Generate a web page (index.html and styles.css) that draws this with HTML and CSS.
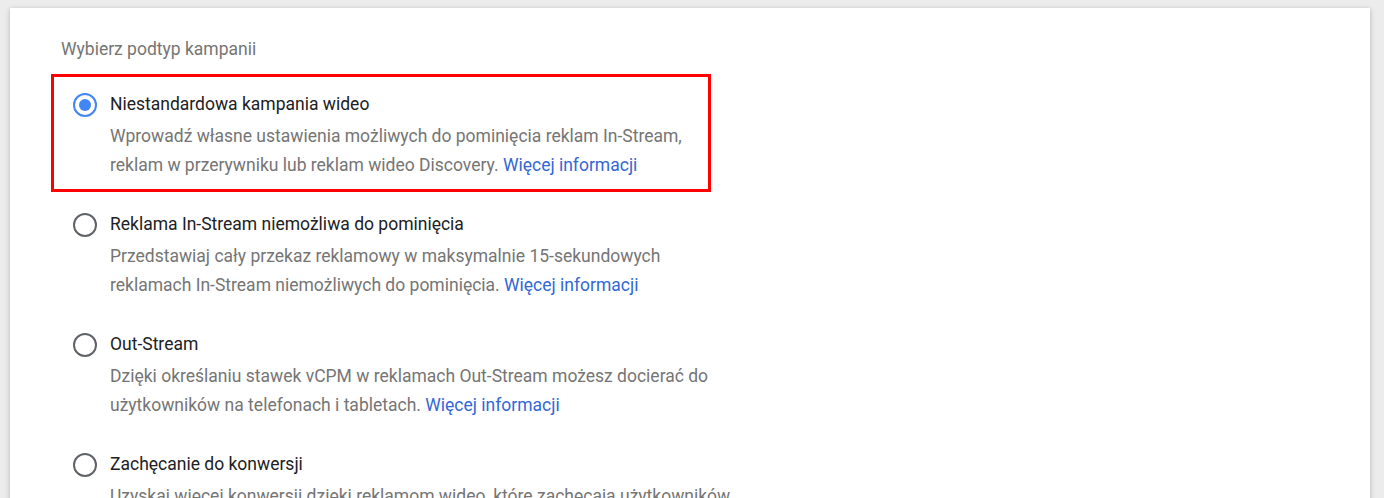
FILE: index.html
```html
<!DOCTYPE html>
<html lang="pl">
<head>
    <meta charset="UTF-8">
    <meta name="viewport" content="width=device-width, initial-scale=1.0">
    <title>Podtyp kampanii</title>
    <link rel="stylesheet" href="styles.css">
</head>
<body>
    <div class="card">
        <div class="section-title">Wybierz podtyp kampanii</div>
        <div class="options">
            <div class="option highlighted">
                <span class="radio checked"></span>
                <div class="option-text">
                    <div class="option-name">Niestandardowa kampania wideo</div>
                    <div class="option-desc">Wprowadź własne ustawienia możliwych do pominięcia reklam In-Stream, reklam w przerywniku lub reklam wideo Discovery. <a href="#">Więcej informacji</a></div>
                </div>
            </div>
            <div class="option">
                <span class="radio"></span>
                <div class="option-text">
                    <div class="option-name">Reklama In-Stream niemożliwa do pominięcia</div>
                    <div class="option-desc">Przedstawiaj cały przekaz reklamowy w maksymalnie 15-sekundowych reklamach In-Stream niemożliwych do pominięcia. <a href="#">Więcej informacji</a></div>
                </div>
            </div>
            <div class="option">
                <span class="radio"></span>
                <div class="option-text">
                    <div class="option-name">Out-Stream</div>
                    <div class="option-desc">Dzięki określaniu stawek vCPM w reklamach Out-Stream możesz docierać do użytkowników na telefonach i tabletach. <a href="#">Więcej informacji</a></div>
                </div>
            </div>
            <div class="option">
                <span class="radio"></span>
                <div class="option-text">
                    <div class="option-name">Zachęcanie do konwersji</div>
                    <div class="option-desc">Uzyskaj więcej konwersji dzięki reklamom wideo, które zachęcają użytkowników do działania. <a href="#">Więcej informacji</a></div>
                </div>
            </div>
        </div>
    </div>
</body>
</html>
```

FILE: styles.css
```css
html, body {
    height: 100%;
    overflow: hidden;
}
body {
    margin: 0;
    background-color: #ececec;
    font-family: Roboto, "Liberation Sans", sans-serif;
    font-size: 17.5px;
}
.card {
    margin: 8px 14px 0 10px;
    min-height: 600px;
    background-color: white;
    box-shadow: 0 1px 4px rgba(0, 0, 0, 0.18), 0 2px 8px rgba(0, 0, 0, 0.08);
    padding: 29px 0 0 41px;
}
.section-title {
    color: #757575;
    line-height: 24px;
    padding-left: 10px;
    margin-bottom: 13px;
}
.options {
    display: flex;
    flex-direction: column;
    gap: 2px;
}
.option {
    display: flex;
    align-items: flex-start;
    width: 660px;
    box-sizing: border-box;
    border: 3px solid transparent;
    padding: 13px 0 9px 19px;
}
.option.highlighted {
    border-color: #ff0000;
}
.radio {
    flex: none;
    width: 20px;
    height: 20px;
    border: 2px solid #5f6368;
    border-radius: 50%;
    margin: 3px 13px 0 0;
    position: relative;
}
.radio.checked {
    border-color: #4285f4;
}
.radio.checked::after {
    content: "";
    position: absolute;
    left: 4px;
    top: 4px;
    width: 12px;
    height: 12px;
    border-radius: 50%;
    background-color: #4285f4;
}
.option-text {
    flex: none;
    width: 624px;
}
.option-name {
    color: #202124;
    line-height: 28px;
    margin-bottom: 4px;
}
.option-desc {
    color: #757575;
    line-height: 29px;
}
.option-desc a {
    color: #3367d6;
    text-decoration: none;
}
```
